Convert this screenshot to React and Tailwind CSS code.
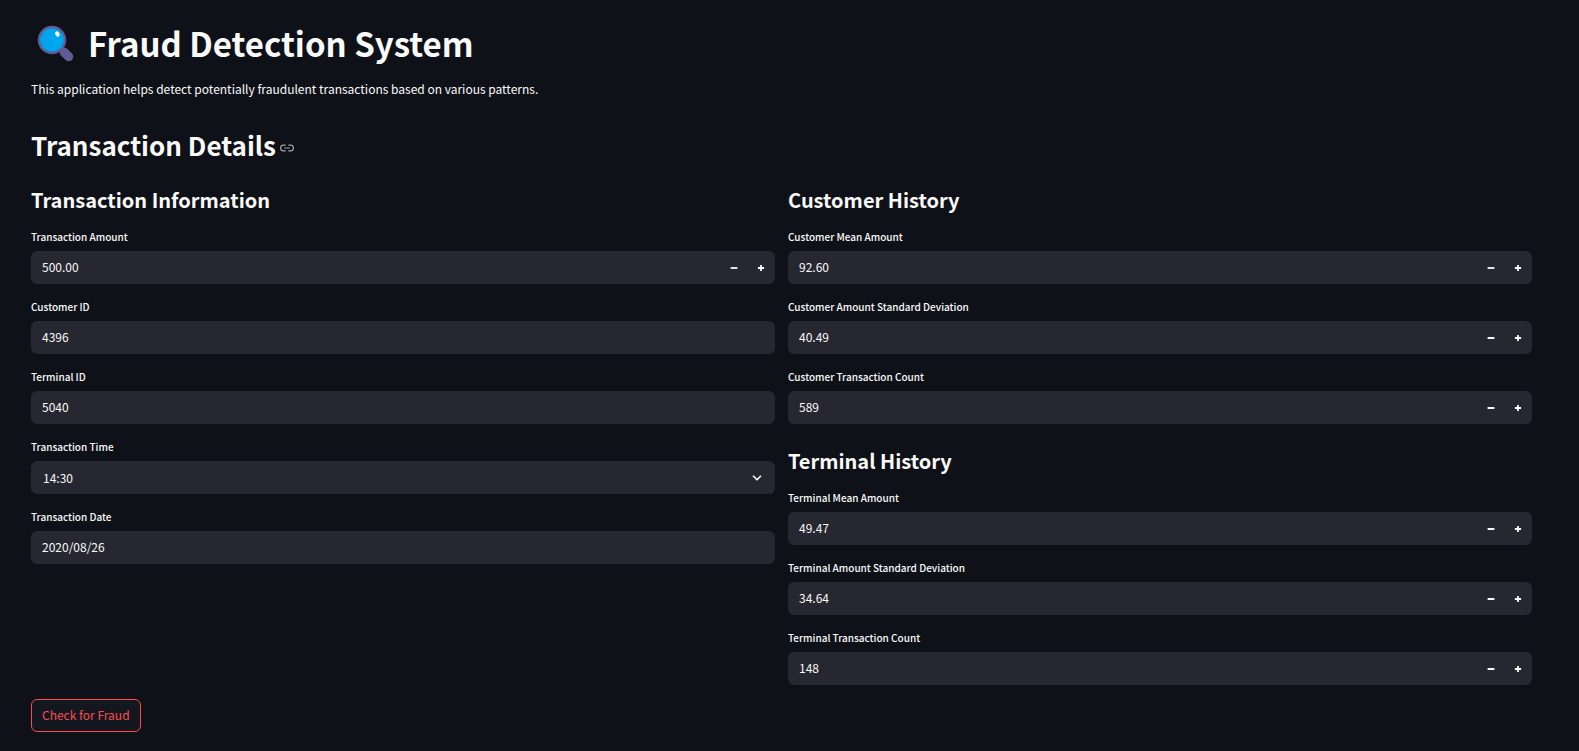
import React from "react";
import { ChevronDown } from "lucide-react";

function MagnifierIcon() {
  return (
    <svg viewBox="0 -1 38 38" className="size-[38px] shrink-0" aria-hidden="true">
      <path d="M27 27 L31.8 31.8" stroke="#635994" strokeWidth="9" strokeLinecap="round" />
      <path d="M22 22 L28 28" stroke="#635994" strokeWidth="4" />
      <circle cx="15" cy="15" r="14.2" fill="#635994" />
      <circle cx="15" cy="15" r="11.8" fill="#00a6ed" />
      <ellipse cx="20.4" cy="9" rx="2" ry="2.7" fill="#fff" transform="rotate(-24 20.4 9)" />
    </svg>
  );
}

function LinkIcon() {
  return (
    <svg viewBox="0 0 24 24" className="size-3.5" fill="none" stroke="currentColor" strokeWidth="2" strokeLinecap="round" strokeLinejoin="round" aria-hidden="true">
      <path d="M15 7h3a5 5 0 0 1 5 5 5 5 0 0 1-5 5h-3m-6 0H6a5 5 0 0 1-5-5 5 5 0 0 1 5-5h3" />
      <path d="M8 12h8" />
    </svg>
  );
}

function StepIcon({ plus }) {
  return (
    <svg viewBox="0 0 8 8" className="size-2" fill="currentColor" aria-hidden="true">
      {plus ? <path d="M3.1.9h1.8v2.2h2.2v1.8H4.9v2.2H3.1V4.9H.9V3.1h2.2z" /> : <path d="M.6 3.1h6.8v1.8H.6z" />}
    </svg>
  );
}

function Field({ id, label, children }) {
  return (
    <div className="flex flex-col">
      <label htmlFor={id} className="h-5 text-[10px] leading-3 font-medium">{label}</label>
      <div className="flex h-[33px] items-stretch overflow-hidden rounded-md bg-[#262730]">{children}</div>
    </div>
  );
}

const inputClass = "min-w-0 flex-1 bg-transparent px-[11px] pb-0.5 text-xs outline-none";

function TextField({ id, label, value }) {
  return (
    <Field id={id} label={label}>
      <input id={id} type="text" defaultValue={value} className={inputClass} />
    </Field>
  );
}

function NumberField({ id, label, value }) {
  return (
    <Field id={id} label={label}>
      <input id={id} type="text" inputMode="decimal" defaultValue={value} className={inputClass} />
      <div className="flex pr-px">
        <button type="button" aria-label={"Decrease " + label} className="flex w-[27px] items-center justify-center"><StepIcon /></button>
        <button type="button" aria-label={"Increase " + label} className="flex w-[27px] items-center justify-center"><StepIcon plus /></button>
      </div>
    </Field>
  );
}

function SelectField({ id, label, value }) {
  return (
    <Field id={id} label={label}>
      <div className="relative flex flex-1">
        <select id={id} defaultValue={value} className="flex-1 appearance-none bg-transparent px-3 text-xs outline-none">
          <option>{value}</option>
        </select>
        <ChevronDown className="pointer-events-none absolute top-2.5 right-[11px] size-3.5" strokeWidth={3} aria-hidden="true" />
      </div>
    </Field>
  );
}

function Group({ title, children }) {
  return (
    <section className="flex flex-col">
      <h3 className="h-11 text-[20px] leading-[26px] font-bold">{title}</h3>
      <div className="flex flex-col gap-[17px]">{children}</div>
    </section>
  );
}

export default function App() {
  return (
    <main className="min-h-screen bg-[#0e1117] pt-6 pr-[47px] pb-[19px] pl-[31px] font-['Noto_Sans_CJK_SC',sans-serif] text-[#fafafa]">
      <h1 className="flex items-center gap-[13px] pl-1.5 text-[33px] leading-[38px] font-bold">
        <MagnifierIcon />
        Fraud Detection System
      </h1>
      <p className="mt-[17px] text-xs leading-5">This application helps detect potentially fraudulent transactions based on various patterns.</p>
      <div className="mt-7 flex items-center gap-1">
        <h2 className="text-[26px] leading-9 font-bold">Transaction Details</h2>
        <a href="#transaction-details" aria-label="Link to Transaction Details" className="pt-1.5 text-[#a3a4a6]"><LinkIcon /></a>
      </div>
      <form className="mt-6">
        <div className="grid grid-cols-2 items-start gap-[13px]">
          <Group title="Transaction Information">
            <NumberField id="amount" label="Transaction Amount" value="500.00" />
            <TextField id="customer" label="Customer ID" value="4396" />
            <TextField id="terminal" label="Terminal ID" value="5040" />
            <SelectField id="time" label="Transaction Time" value="14:30" />
            <TextField id="date" label="Transaction Date" value="2020/08/26" />
          </Group>
          <div className="flex flex-col gap-6">
            <Group title="Customer History">
              <NumberField id="cmean" label="Customer Mean Amount" value="92.60" />
              <NumberField id="cstd" label="Customer Amount Standard Deviation" value="40.49" />
              <NumberField id="ccount" label="Customer Transaction Count" value="589" />
            </Group>
            <Group title="Terminal History">
              <NumberField id="tmean" label="Terminal Mean Amount" value="49.47" />
              <NumberField id="tstd" label="Terminal Amount Standard Deviation" value="34.64" />
              <NumberField id="tcount" label="Terminal Transaction Count" value="148" />
            </Group>
          </div>
        </div>
        <button type="button" className="mt-3.5 h-[33px] rounded-md border border-[#ff4b4b] bg-[#131720] px-2.5 pb-0.5 text-xs text-[#ff4b4b]">Check for Fraud</button>
      </form>
    </main>
  );
}
